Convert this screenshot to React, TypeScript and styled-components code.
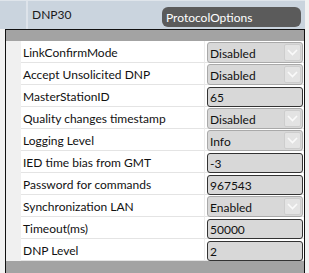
import React from "react";
import styled, { createGlobalStyle } from "styled-components";

const Global = createGlobalStyle`
  html, body { margin: 0; padding: 0; background: #f0f0f0; }
  body { font-family: Lato, "Noto Sans", sans-serif; }
`;

const Page = styled.div`
  width: 309px;
  height: 273px;
  overflow: hidden;
  position: relative;
  background: #f2f2f2;
`;

const TopBar = styled.div`
  height: 29px;
  width: 305px;
  display: flex;
  align-items: stretch;
  background: #cad4de;
  border-top: 1px solid #dfe5eb;
  box-sizing: border-box;
`;

const Cell = styled.div<{ $w: number }>`
  width: ${(p) => p.$w}px;
  flex: none;
  display: flex;
  align-items: center;
  box-sizing: border-box;
  font-size: 12px;
  color: #1a1a1a;
`;

const RowHeadCell = styled(Cell)`
  border-right: 2px solid #dde3ea;
`;

const NameCell = styled(Cell)`
  padding-left: 4px;
  padding-bottom: 2px;
`;

const Pill = styled.div`
  margin: 6px 0 2px 0;
  width: 139px;
  box-sizing: border-box;
  background: #5b5b5b;
  color: #fff;
  border-radius: 6px;
  font-size: 12px;
  display: flex;
  align-items: center;
  padding-left: 4px;
`;

const Panel = styled.div`
  margin-left: 5px;
  width: 300px;
  box-sizing: border-box;
  border: 1px solid #111;
  border-bottom: none;
  background: #fff;
`;

const Band = styled.div<{ $h: number }>`
  height: ${(p) => p.$h}px;
  background: #a3a3a3;
`;

const Grid = styled.div`
  display: grid;
  grid-template-columns: 15px 184px 99px;
`;

const Gutter = styled.div`
  background: #f0f0f0;
  height: 22px;
`;

const Label = styled.div`
  height: 22px;
  box-sizing: border-box;
  border-bottom: 1px solid #e4e4e4;
  border-right: 1px solid #ececec;
  font-size: 12px;
  color: #111;
  padding: 4px 0 0 2px;
  white-space: nowrap;
  overflow: hidden;
`;

const ValueCell = styled.div`
  height: 22px;
  box-sizing: border-box;
  border-bottom: 1px solid #e4e4e4;
  padding: 1px 1px 0 2px;
  display: flex;
  align-items: stretch;
`;

const Combo = styled.div`
  flex: 1;
  height: 21px;
  box-sizing: border-box;
  display: flex;
  background: #d8d8d8;
  border: 1px solid #a9a9a9;
  border-radius: 3px;
  font-size: 12px;
  color: #111;
`;

const ComboText = styled.div`
  flex: 1;
  padding: 1px 0 0 2px;
  display: flex;
  align-items: center;
`;

const ComboButton = styled.div`
  width: 17px;
  margin: 1px 1px 1px 0;
  box-sizing: border-box;
  background: #e3e3e3;
  border: 1px solid #cdcdcd;
  border-radius: 2px;
  display: flex;
  align-items: center;
  justify-content: center;
`;

const TextBox = styled.div`
  flex: 1;
  height: 20px;
  margin-top: 1px;
  box-sizing: border-box;
  background: #d8d8d8;
  border: 1px solid #333;
  border-radius: 3px;
  font-size: 12px;
  color: #111;
  padding: 1px 0 0 2px;
  display: flex;
  align-items: center;
`;

type Row = { label: string; value: string; kind: "combo" | "text" };

const rows: Row[] = [
  { label: "LinkConfirmMode", value: "Disabled", kind: "combo" },
  { label: "Accept Unsolicited DNP", value: "Disabled", kind: "combo" },
  { label: "MasterStationID", value: "65", kind: "text" },
  { label: "Quality changes timestamp", value: "Disabled", kind: "combo" },
  { label: "Logging Level", value: "Info", kind: "combo" },
  { label: "IED time bias from GMT", value: "-3", kind: "text" },
  { label: "Password for commands", value: "967543", kind: "text" },
  { label: "Synchronization LAN", value: "Enabled", kind: "combo" },
  { label: "Timeout(ms)", value: "50000", kind: "text" },
  { label: "DNP Level", value: "2", kind: "text" },
];

const Chevron = () => (
  <svg width="11" height="7" viewBox="0 0 11 7">
    <path d="M1 1 L5.5 5.5 L10 1" fill="none" stroke="#fafafa" strokeWidth="1.6" />
  </svg>
);

export default function App() {
  return (
    <Page>
      <Global />
      <TopBar>
        <RowHeadCell $w={28} />
        <NameCell $w={134}>DNP30</NameCell>
        <Pill>ProtocolOptions</Pill>
      </TopBar>
      <Panel>
        <Band $h={11} />
        <Grid>
          {rows.map((r) => (
            <React.Fragment key={r.label}>
              <Gutter />
              <Label>{r.label}</Label>
              <ValueCell>
                {r.kind === "combo" ? (
                  <Combo>
                    <ComboText>{r.value}</ComboText>
                    <ComboButton>
                      <Chevron />
                    </ComboButton>
                  </Combo>
                ) : (
                  <TextBox>{r.value}</TextBox>
                )}
              </ValueCell>
            </React.Fragment>
          ))}
        </Grid>
        <Band $h={14} />
      </Panel>
    </Page>
  );
}
